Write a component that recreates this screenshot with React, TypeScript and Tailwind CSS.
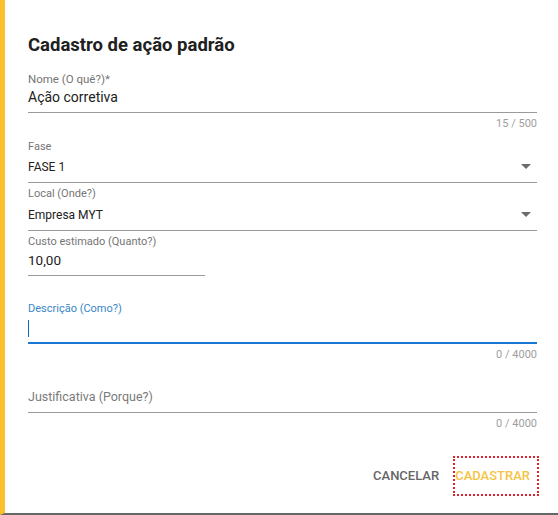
import React from "react";

const Arrow = () => (
  <svg width="24" height="24" viewBox="0 0 24 24" className="absolute right-[-1px] top-[-3px]">
    <path d="M7 10l5 5 5-5z" fill="#6b6b6b" />
  </svg>
);

export default function App() {
  return (
    <div className="h-[515px] w-full bg-white border-l-[5px] border-l-[#fbc02d] border-b-2 border-b-[#666666] pl-[23px] pr-[21px] flex flex-col font-['Roboto',sans-serif] text-[#212121] overflow-hidden">
      <div className="mt-[33px] h-[24px] leading-[24px] text-[18.5px] font-bold text-[#202020]">
        Cadastro de ação padrão
      </div>

      {/* Nome */}
      <div className="mt-[14px] leading-4 text-[11.5px] text-[#757575]">Nome (O quê?)*</div>
      <div className="leading-5 text-[14px] pb-[5px] border-b border-[#9a9a9a]">Ação corretiva</div>
      <div className="mt-[3px] leading-4 text-[11px] text-[#9e9e9e] text-right">15 / 500</div>

      {/* Fase */}
      <div className="mt-[7px] leading-4 text-[11px] text-[#757575]">Fase</div>
      <div className="relative mt-[2px] leading-5 text-[12px] pb-[5px] border-b border-[#9a9a9a]">
        FASE 1
        <Arrow />
      </div>

      {/* Local */}
      <div className="mt-[3px] leading-4 text-[11px] text-[#757575]">Local (Onde?)</div>
      <div className="relative mt-[3px] leading-5 text-[12px] pb-[5px] border-b border-[#9a9a9a]">
        Empresa MYT
        <Arrow />
      </div>

      {/* Custo */}
      <div className="w-[177px]">
        <div className="mt-[3px] leading-4 text-[11px] text-[#757575]">Custo estimado (Quanto?)</div>
        <div className="leading-5 text-[13.5px] pb-[5px] border-b border-[#9a9a9a]">10,00</div>
      </div>

      {/* Descrição */}
      <div className="mt-[25px] leading-4 text-[11px] text-[#3a86c8]">Descrição (Como?)</div>
      <div className="mt-[1px] h-[20px] pb-[4px] box-content border-b-2 border-[#1976d2] flex items-center">
        <div className="w-[1px] h-[17px] bg-[#1565c0]" />
      </div>
      <div className="mt-[3px] leading-4 text-[11px] text-[#9e9e9e] text-right">0 / 4000</div>

      {/* Justificativa */}
      <div className="mt-[24px] leading-5 text-[12.5px] text-[#7a7a7a] pb-[5px] border-b border-[#9a9a9a]">
        Justificativa (Porque?)
      </div>
      <div className="mt-[3px] leading-4 text-[11px] text-[#9e9e9e] text-right">0 / 4000</div>

      {/* Buttons */}
      <div className="mt-[24px] mr-[-2px] flex justify-end items-center gap-[6px]">
        <button className="h-[36px] px-[8px] text-[13px] font-medium text-[#666666] uppercase">
          Cancelar
        </button>
        <button className="h-[40px] pl-0 pr-[7px] border-2 border-dotted border-[#e0202a] flex items-center">
          <span className="text-[13px] font-medium text-[#f6c342] uppercase">Cadastrar</span>
        </button>
      </div>
    </div>
  );
}
